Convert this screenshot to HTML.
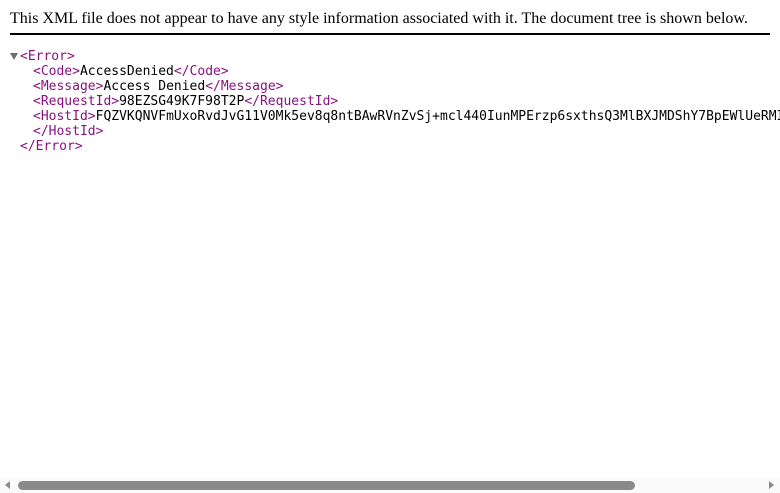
<!DOCTYPE html>
<html><head><style>
html,body{margin:0;padding:0;width:780px;height:493px;overflow:hidden;background:#fff;}
.hdr{position:absolute;left:10px;top:10px;width:760px;font:16px "Liberation Serif",serif;color:#000;border-bottom:2px solid #000;padding-bottom:4px;white-space:nowrap;height:19px;}
.tree{position:absolute;left:0;top:49px;font:13px "DejaVu Sans Mono",monospace;line-height:15px;white-space:pre;color:#000;}
.l{position:absolute;white-space:pre;}
.t{color:#881280;}
.tri{position:absolute;left:10px;top:4px;width:0;height:0;border-left:4px solid transparent;border-right:4px solid transparent;border-top:7px solid #6e6e6e;}
.sb{position:absolute;left:0;top:478px;width:780px;height:15px;background:#fafafa;}
.th{position:absolute;left:18px;top:3px;width:617px;height:9px;background:#8a8a8a;border-radius:5px;}
.al{position:absolute;left:5px;top:3px;border-top:4px solid transparent;border-bottom:4px solid transparent;border-right:5px solid #8a8a8a;}
.ar{position:absolute;left:769px;top:3px;border-top:4px solid transparent;border-bottom:4px solid transparent;border-left:5px solid #8a8a8a;}
</style></head><body>
<div class="hdr">This XML file does not appear to have any style information associated with it. The document tree is shown below.</div>
<div class="tree">
<div class="tri"></div>
<div class="l" style="left:20px;top:0"><span class="t">&lt;Error&gt;</span></div>
<div class="l" style="left:33px;top:15px"><span class="t">&lt;Code&gt;</span>AccessDenied<span class="t">&lt;/Code&gt;</span></div>
<div class="l" style="left:33px;top:30px"><span class="t">&lt;Message&gt;</span>Access Denied<span class="t">&lt;/Message&gt;</span></div>
<div class="l" style="left:33px;top:45px"><span class="t">&lt;RequestId&gt;</span>98EZSG49K7F98T2P<span class="t">&lt;/RequestId&gt;</span></div>
<div class="l" style="left:33px;top:60px"><span class="t">&lt;HostId&gt;</span>FQZVKQNVFmUxoRvdJvG11V0Mk5ev8q8ntBAwRVnZvSj+mcl440IunMPErzp6sxthsQ3MlBXJMDShY7BpEWlUeRMI=</div>
<div class="l" style="left:33px;top:75px"><span class="t">&lt;/HostId&gt;</span></div>
<div class="l" style="left:20px;top:90px"><span class="t">&lt;/Error&gt;</span></div>
</div>
<div class="sb"><div class="al"></div><div class="th"></div><div class="ar"></div></div>
</body></html>
